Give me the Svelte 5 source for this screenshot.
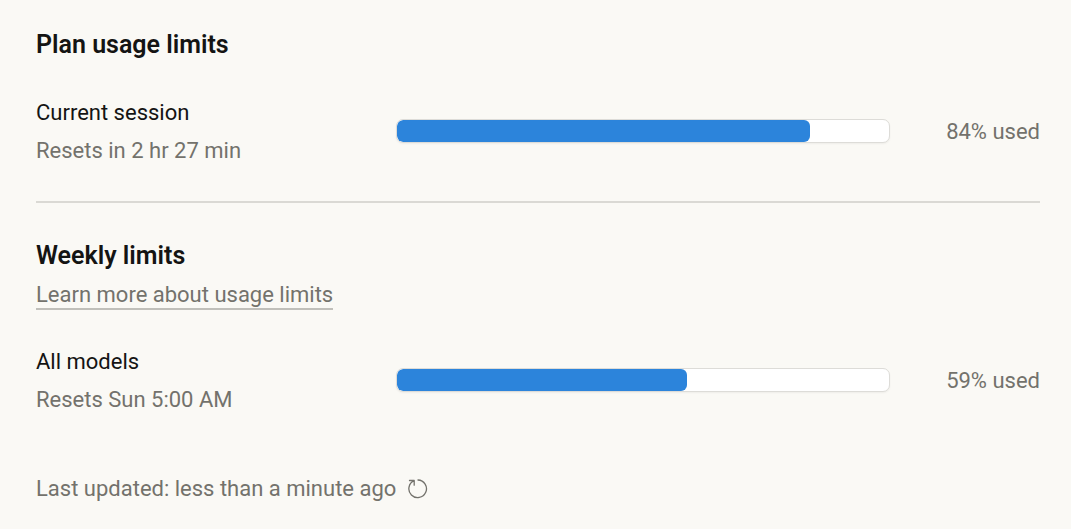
<script>
  const session = { name: 'Current session', reset: 'Resets in 2 hr 27 min', used: 84 };
  const weekly = { name: 'All models', reset: 'Resets Sun 5:00 AM', used: 59 };
</script>

{#snippet usage(item)}
  <div class="row">
    <div class="label">
      <h3>{item.name}</h3>
      <p>{item.reset}</p>
    </div>
    <div class="track" role="progressbar" aria-label={item.name} aria-valuenow={item.used} aria-valuemin="0" aria-valuemax="100">
      <div class="fill" style="width: {item.used}%"></div>
    </div>
    <span class="used">{item.used}% used</span>
  </div>
{/snippet}

<main>
  <section>
    <h2>Plan usage limits</h2>
    {@render usage(session)}
  </section>
  <hr />
  <section>
    <h2>Weekly limits</h2>
    <a href="#usage">Learn more about usage limits</a>
    {@render usage(weekly)}
  </section>
  <footer>
    <span>Last updated: less than a minute ago</span>
    <button aria-label="Refresh">
      <svg viewBox="0 0 20 20" fill="none" stroke="currentColor" stroke-width="1.3" stroke-linecap="round" stroke-linejoin="round">
        <path d="M1.5 1.5h4.7v4.7M6.2 1.7A8.8 8.8 0 1 0 10 1" />
      </svg>
    </button>
  </footer>
</main>

<style>
  :global(body) {
    margin: 0;
    background: #faf9f5;
  }
  main {
    padding: 29px 31px 20px 36px;
    font: 22px/32px Roboto, sans-serif;
    color: #73726c;
  }
  h2, h3, p {
    margin: 0;
  }
  h2 {
    font-size: 25px;
    font-weight: 600;
    line-height: 32px;
    color: #141413;
  }
  h3 {
    font-size: 22px;
    font-weight: 400;
    color: #141413;
  }
  .row {
    display: grid;
    grid-template-columns: 312px 1fr 102px;
    column-gap: 48px;
    align-items: center;
    margin-top: 34px;
  }
  .label {
    display: grid;
    gap: 6px;
    padding-top: 2px;
  }
  .track {
    height: 22px;
    border: 1px solid #dddcd8;
    border-radius: 7px;
    background: #fff;
    overflow: hidden;
    box-shadow: 0 1px 2px #0000000d;
  }
  .fill {
    height: 100%;
    border-radius: 6px;
    background: #2c84db;
  }
  .used {
    padding-top: 2px;
    text-align: right;
    white-space: nowrap;
  }
  hr {
    height: 2px;
    margin: 34px 0 37px;
    border: 0;
    background: #dad9d4;
  }
  a {
    display: block;
    width: fit-content;
    margin-top: 10px;
    color: inherit;
    line-height: 26px;
    border-bottom: 2px solid #c0bfba;
    text-decoration: none;
  }
  footer {
    display: flex;
    align-items: center;
    gap: 12px;
    margin-top: 57px;
  }
  button {
    display: flex;
    padding: 0;
    border: 0;
    background: none;
    color: inherit;
  }
  svg {
    width: 20px;
    height: 20px;
  }
</style>
